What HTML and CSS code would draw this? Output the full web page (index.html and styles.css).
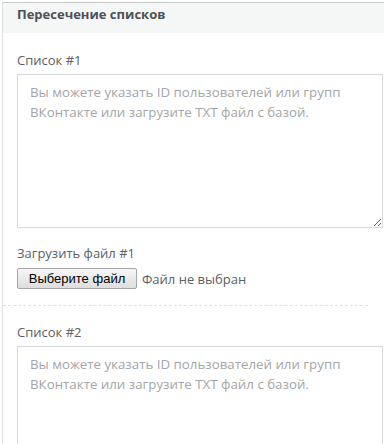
FILE: index.html
```html
<!DOCTYPE html>
<html lang="ru">
<head>
<meta charset="utf-8">
<link rel="stylesheet" href="styles.css">
</head>
<body>
<div class="panel">
  <div class="panel-head">Пересечение списков</div>
  <div class="section">
    <div class="label">Список #1</div>
    <textarea class="area" placeholder="Вы можете указать ID пользователей или групп ВКонтакте или загрузите TXT файл с базой."></textarea>
    <div class="label file-label">Загрузить файл #1</div>
    <div class="file-row">
      <span class="file-btn">Выберите файл</span>
      <span class="file-name">Файл не выбран</span>
    </div>
  </div>
  <div class="divider"></div>
  <div class="section section2">
    <div class="label">Список #2</div>
    <textarea class="area" placeholder="Вы можете указать ID пользователей или групп ВКонтакте или загрузите TXT файл с базой."></textarea>
  </div>
</div>
</body>
</html>
```
FILE: styles.css
```css
html, body {
  margin: 0;
  padding: 0;
  background: #ffffff;
  overflow: hidden;
}
body {
  font-family: "Open Sans", "Noto Sans", sans-serif;
  color: #555b60;
}
.panel {
  margin: 2px 0 0 2px;
  border-top: 1px solid #c8c9ca;
  border-left: 1px solid #dde1e2;
  height: 441px;
  overflow: hidden;
}
.panel-head {
  height: 30px;
  line-height: 22px;
  background: #f5f6f6;
  padding-left: 14px;
  font-size: 13px;
  font-weight: 700;
  color: #4c5257;
}
.section {
  padding: 18px 0 0 14px;
}
.label {
  font-size: 13px;
  line-height: 18px;
  height: 18px;
  color: #5b6166;
  margin-bottom: 5px;
}
.area {
  display: block;
  box-sizing: border-box;
  width: 366px;
  height: 154px;
  margin: 0;
  border: 1px solid #d6dadb;
  border-radius: 0;
  padding: 7px 12px;
  font-family: "Open Sans", "Noto Sans", sans-serif;
  font-size: 13.3px;
  line-height: 20px;
  color: #555;
  resize: both;
  outline: none;
}
.area::placeholder {
  color: #a3a6a8;
}
.file-label {
  margin-top: 16px;
  margin-bottom: 6px;
}
.file-row {
  display: flex;
  align-items: center;
  height: 21px;
}
.file-btn {
  box-sizing: border-box;
  height: 21px;
  width: 120px;
  display: flex;
  align-items: center;
  justify-content: center;
  font-family: "Liberation Sans", Arial, sans-serif;
  font-size: 13px;
  color: #000;
  border: 1px solid #a6a6a6;
  border-radius: 2px;
  background: linear-gradient(#f6f6f6, #dedede);
}
.file-name {
  margin-left: 5px;
  font-size: 13px;
  color: #5b6166;
}
.divider {
  margin: 16px 16px 0 0;
  border-top: 1px dashed #dce2e2;
}
.section2 {
  padding-top: 17px;
}
```
